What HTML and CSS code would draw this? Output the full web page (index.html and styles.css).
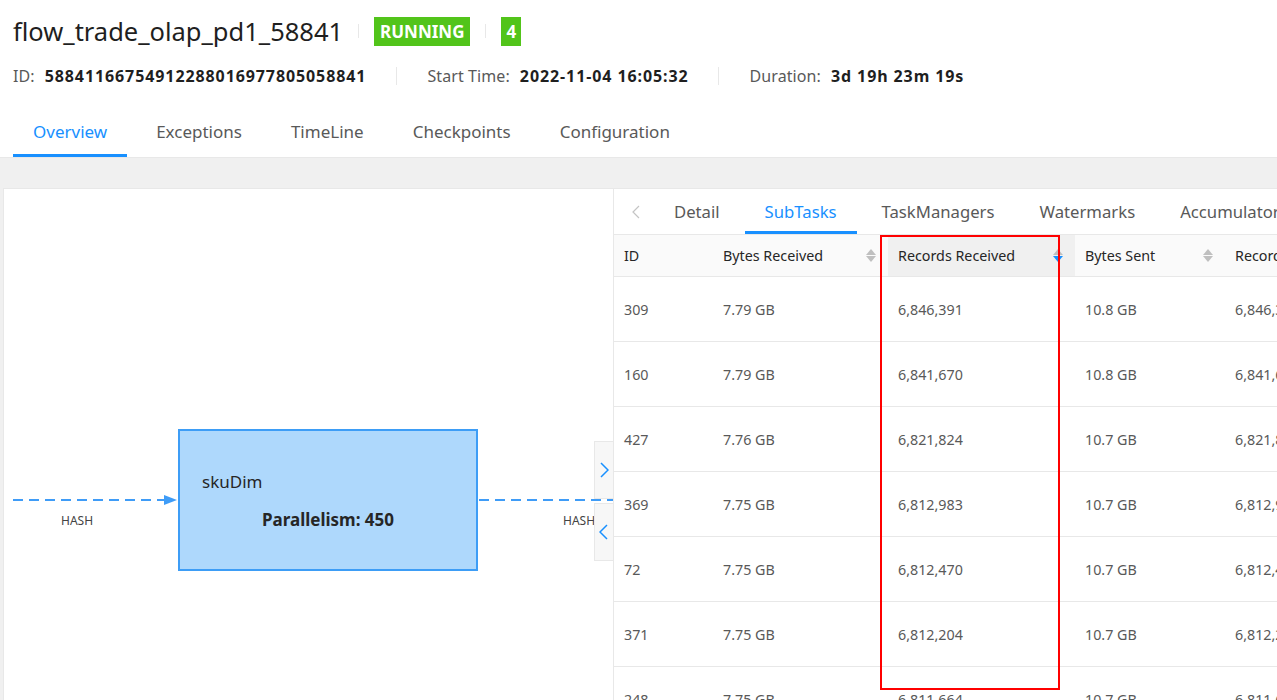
FILE: index.html
```html
<!DOCTYPE html>
<html>
<head>
<meta charset="utf-8">
<link rel="stylesheet" href="styles.css">
</head>
<body>
<div class="header">
  <div class="title-row">
    <h1 class="title">flow_trade_olap_pd1_58841</h1>
    <span class="vdiv"></span>
    <span class="tag">RUNNING</span>
    <span class="vdiv"></span>
    <span class="tag tag-num">4</span>
  </div>
  <div class="meta-row">
    <span class="meta-label">ID:</span><span class="meta-value">58841166754912288016977805058841</span>
    <span class="mdiv"></span>
    <span class="meta-label">Start Time:</span><span class="meta-value">2022-11-04 16:05:32</span>
    <span class="mdiv"></span>
    <span class="meta-label">Duration:</span><span class="meta-value">3d 19h 23m 19s</span>
  </div>
  <div class="tabs">
    <div class="tab active">Overview</div>
    <div class="tab">Exceptions</div>
    <div class="tab">TimeLine</div>
    <div class="tab">Checkpoints</div>
    <div class="tab">Configuration</div>
  </div>
</div>
<div class="main">
  <div class="panel">
    <div class="graph">
      <svg class="edges" width="609" height="511" viewBox="0 0 609 511">
        <line x1="9" y1="311" x2="163" y2="311" stroke="#3f9cf7" stroke-width="2" stroke-dasharray="10,6"/>
        <polygon points="160,306 173,311 160,316" fill="#3f9cf7"/>
        <line x1="475" y1="311" x2="609" y2="311" stroke="#3f9cf7" stroke-width="2" stroke-dasharray="10,6"/>
      </svg>
      <div class="edge-label l1">HASH</div>
      <div class="edge-label l2">HASH</div>
      <div class="node">
        <div class="node-name">skuDim</div>
        <div class="node-par">Parallelism: 450</div>
      </div>
      <div class="collapse c1"><svg width="10" height="18" viewBox="0 0 10 18"><polyline points="2,2 9,9 2,16" fill="none" stroke="#1890ff" stroke-width="1.5"/></svg></div>
      <div class="collapse c2"><svg width="10" height="18" viewBox="0 0 10 18"><polyline points="8,2 1,9 8,16" fill="none" stroke="#1890ff" stroke-width="1.5"/></svg></div>
    </div>
    <div class="side">
      <div class="side-tabs">
        <div class="side-prev"><svg width="8" height="14" viewBox="0 0 8 14"><polyline points="7,1 1,7 7,13" fill="none" stroke="#c4c4c4" stroke-width="1.2"/></svg></div>
        <div class="stab">Detail</div>
        <div class="stab active">SubTasks</div>
        <div class="stab">TaskManagers</div>
        <div class="stab">Watermarks</div>
        <div class="stab">Accumulators</div>
      </div>
      <table class="tbl">
        <colgroup>
          <col class="w-id"><col class="w-br"><col class="w-rr"><col class="w-bs"><col class="w-rs">
        </colgroup>
        <thead>
          <tr>
            <th>ID</th>
            <th><div class="th-in">Bytes Received<span class="sorter"><i class="up"></i><i class="down"></i></span></div></th>
            <th class="sorted"><div class="th-in">Records Received<span class="sorter"><i class="up"></i><i class="down on"></i></span></div></th>
            <th><div class="th-in">Bytes Sent<span class="sorter"><i class="up"></i><i class="down"></i></span></div></th>
            <th><div class="th-in">Records Sent<span class="sorter"><i class="up"></i><i class="down"></i></span></div></th>
          </tr>
        </thead>
        <tbody>
          <tr><td>309</td><td>7.79 GB</td><td>6,846,391</td><td>10.8 GB</td><td>6,846,391</td></tr>
          <tr><td>160</td><td>7.79 GB</td><td>6,841,670</td><td>10.8 GB</td><td>6,841,670</td></tr>
          <tr><td>427</td><td>7.76 GB</td><td>6,821,824</td><td>10.7 GB</td><td>6,821,824</td></tr>
          <tr><td>369</td><td>7.75 GB</td><td>6,812,983</td><td>10.7 GB</td><td>6,812,983</td></tr>
          <tr><td>72</td><td>7.75 GB</td><td>6,812,470</td><td>10.7 GB</td><td>6,812,470</td></tr>
          <tr><td>371</td><td>7.75 GB</td><td>6,812,204</td><td>10.7 GB</td><td>6,812,204</td></tr>
          <tr><td>248</td><td>7.75 GB</td><td>6,811,664</td><td>10.7 GB</td><td>6,811,664</td></tr>
        </tbody>
      </table>
      <div class="highlight"></div>
    </div>
  </div>
</div>
</body>
</html>
```
FILE: styles.css
```css
* { box-sizing: border-box; }
html, body { margin: 0; padding: 0; }
body {
  width: 1277px;
  height: 700px;
  overflow: hidden;
  font-family: "Noto Sans", "Open Sans", sans-serif;
  color: #262626;
  background: #fff;
}
.header {
  padding: 0 13px;
  border-bottom: 1px solid #e8e8e8;
}
.title-row {
  height: 62px;
  display: flex;
  align-items: center;
}
.title {
  margin: 0;
  font-size: 25.5px;
  font-weight: 400;
  color: #1f1f1f;
}
.vdiv {
  width: 1px;
  height: 14px;
  background: #e8e8e8;
  margin: 0 15px;
}
.tag {
  background: #52c41a;
  color: #fff;
  font-weight: 700;
  font-size: 17px;
  height: 29px;
  line-height: 29px;
  padding: 0 6px;
}
.tag-num { padding: 0 5px; }
.meta-row {
  height: 28px;
  display: flex;
  align-items: center;
  font-size: 16px;
}
.meta-label { color: #595959; margin-right: 10px; letter-spacing: 0.1px; }
.meta-value { font-weight: 700; color: #1f1f1f; letter-spacing: 0.9px; }
.mdiv {
  width: 1px;
  height: 18px;
  background: #e8e8e8;
  margin: 0 30px;
}
.tabs {
  display: flex;
  height: 67px;
  align-items: flex-end;
  gap: 9px;
}
.tab {
  padding: 0 20px;
  height: 46px;
  line-height: 42px;
  font-size: 17px;
  color: #595959;
  border-bottom: 3px solid transparent;
}
.tab.active {
  color: #1890ff;
  border-bottom-color: #1890ff;
}
.main {
  background: #f0f0f0;
  padding: 30px 0 0 3px;
  height: 542px;
}
.panel {
  display: flex;
  height: 100%;
  background: #fff;
  border-top: 1px solid #e8e8e8;
  border-left: 1px solid #e8e8e8;
}
.graph {
  position: relative;
  width: 610px;
  flex: none;
  border-right: 1px solid #e8e8e8;
}
.edges { position: absolute; left: 0; top: 0; }
.edge-label {
  position: absolute;
  font-size: 12px;
  color: #444;
  top: 323px;
}
.l1 { left: 57px; }
.l2 { left: 559px; }
.node {
  position: absolute;
  left: 174px;
  top: 240px;
  width: 300px;
  height: 142px;
  background: #aed8fc;
  border: 2px solid #3d9df6;
  padding: 39px 0 0 22px;
}
.node-name { font-size: 17px; color: #262626; }
.node-par {
  font-size: 17px;
  font-weight: 700;
  text-align: center;
  margin: 15px 0 0 -22px;
  color: #262626;
}
.collapse {
  position: absolute;
  left: 590px;
  width: 20px;
  height: 58px;
  background: #f7f7f7;
  border: 1px solid #e8e8e8;
  display: flex;
  align-items: center;
  justify-content: center;
}
.c1 { top: 252px; }
.c2 { top: 314px; }
.side {
  position: relative;
  flex: 1;
  overflow: hidden;
}
.side-tabs {
  display: flex;
  height: 46px;
  border-bottom: 1px solid #e8e8e8;
  align-items: flex-end;
  white-space: nowrap;
}
.side-prev {
  width: 36px;
  height: 45px;
  display: flex;
  align-items: center;
  justify-content: center;
  margin-left: 4px;
  flex: none;
}
.stab {
  padding: 0 20px;
  height: 45px;
  line-height: 46px;
  font-size: 16.7px;
  color: #595959;
  border-bottom: 3px solid transparent;
  margin-right: 5px;
  flex: none;
}
.stab.active { color: #1890ff; border-bottom-color: #1890ff; }
.tbl {
  border-collapse: collapse;
  table-layout: fixed;
  width: 760px;
  font-size: 14.3px;
}
.w-id { width: 99px; }
.w-br { width: 175px; }
.w-rr { width: 187px; }
.w-bs { width: 150px; }
.w-rs { width: 149px; }
.tbl th {
  height: 41px;
  text-align: left;
  font-weight: 400;
  color: #262626;
  padding: 0 10px;
  background: #fafafa;
  border-bottom: 1px solid #e8e8e8;
}
.tbl th.sorted { background: #f0f0f0; }
.th-in {
  display: flex;
  align-items: center;
  justify-content: space-between;
}
.sorter {
  display: flex;
  flex-direction: column;
  gap: 1px;
  margin-right: 2px;
}
.sorter i {
  display: block;
  width: 0;
  height: 0;
  border-left: 5px solid transparent;
  border-right: 5px solid transparent;
}
.sorter .up { border-bottom: 6px solid #bfbfbf; }
.sorter .down { border-top: 6px solid #bfbfbf; }
.sorter .down.on { border-top-color: #1890ff; }
.tbl td {
  height: 65px;
  padding: 2px 10px 0;
  color: #595959;
  border-bottom: 1px solid #e8e8e8;
  white-space: nowrap;
}
.highlight {
  position: absolute;
  left: 266px;
  top: 46px;
  width: 180px;
  height: 455px;
  border: 2px solid #f00;
  pointer-events: none;
}
```
